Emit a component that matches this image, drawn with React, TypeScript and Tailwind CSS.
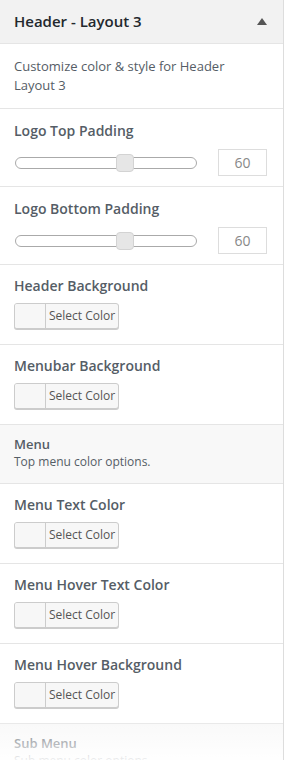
import React from "react";

const font = { fontFamily: "'Open Sans', 'Liberation Sans', sans-serif" };

const SliderRow = ({ title, value }: { title: string; value: number }) => (
  <div className="border-b border-[#e5e5e5] pl-[14px] pr-[16px] pt-[12px] pb-[10px]">
    <div className="text-[14px] leading-[20px] font-semibold text-[#555d66]">{title}</div>
    <div className="mt-[8px] flex items-center gap-[21px]">
      <div className="relative ml-[1px] h-[12px] flex-1 rounded-full border border-[#aaa] bg-white">
        <div className="absolute left-[100px] top-1/2 h-[18px] w-[18px] -translate-y-1/2 rounded-[4px] border border-[#d3d3d3] bg-[#e6e6e6]" />
      </div>
      <div className="flex h-[27px] w-[49px] items-center justify-center border border-[#ddd] bg-white text-[14px] text-[#888]">
        {value}
      </div>
    </div>
  </div>
);

const ColorRow = ({ title }: { title: string }) => (
  <div className="border-b border-[#e5e5e5] pl-[14px] pr-[16px] pt-[11px] pb-[15px]">
    <div className="text-[14px] leading-[20px] font-semibold text-[#555d66]">{title}</div>
    <div className="mt-[7px] flex h-[26px] w-[105px] overflow-hidden rounded-[3px] border border-[#ccc] bg-[#f7f7f7] shadow-[0_1px_0_#ccc]">
      <div className="w-[31px] border-r border-[#ccc] bg-[#f7f7f7]" />
      <div className="flex flex-1 items-center justify-center text-[12px] text-[#555]">Select Color</div>
    </div>
  </div>
);

const GroupRow = ({ title, desc }: { title: string; desc: string }) => (
  <div className="border-b border-[#e5e5e5] bg-[#f8f8f8] pl-[14px] pr-[16px] pt-[9px] pb-[13px]">
    <div className="text-[13px] leading-[20px] font-semibold text-[#555d66]">{title}</div>
    <div className="text-[12px] leading-[16px] text-[#555d66]">{desc}</div>
  </div>
);

export default function App() {
  return (
    <div className="h-[784px] w-[284px] bg-white" style={font}>
      <div className="relative h-[760px] overflow-hidden border-r border-[#ddd]">
        <div className="flex h-[44px] items-center justify-between border-b border-[#e5e5e5] bg-[#f2f2f2] pl-[14px] pr-[16px]">
          <span className="text-[15px] font-semibold text-[#23282d]">Header - Layout 3</span>
          <svg width="10" height="7" viewBox="0 0 10 7">
            <path d="M5 0 L10 7 L0 7 Z" fill="#555" />
          </svg>
        </div>
        <div className="border-b border-[#e5e5e5] pl-[14px] pr-[16px] pt-[13px] pb-[13px] text-[13px] leading-[19px] text-[#555d66]">
          Customize color &amp; style for Header Layout 3
        </div>
        <SliderRow title="Logo Top Padding" value={60} />
        <SliderRow title="Logo Bottom Padding" value={60} />
        <ColorRow title="Header Background" />
        <ColorRow title="Menubar Background" />
        <GroupRow title="Menu" desc="Top menu color options." />
        <ColorRow title="Menu Text Color" />
        <ColorRow title="Menu Hover Text Color" />
        <ColorRow title="Menu Hover Background" />
        <GroupRow title="Sub Menu" desc="Sub menu color options." />
        <div className="pointer-events-none absolute inset-x-0 bottom-0 h-[44px] bg-gradient-to-b from-white/0 via-white/45 to-white/90" />
      </div>
    </div>
  );
}
